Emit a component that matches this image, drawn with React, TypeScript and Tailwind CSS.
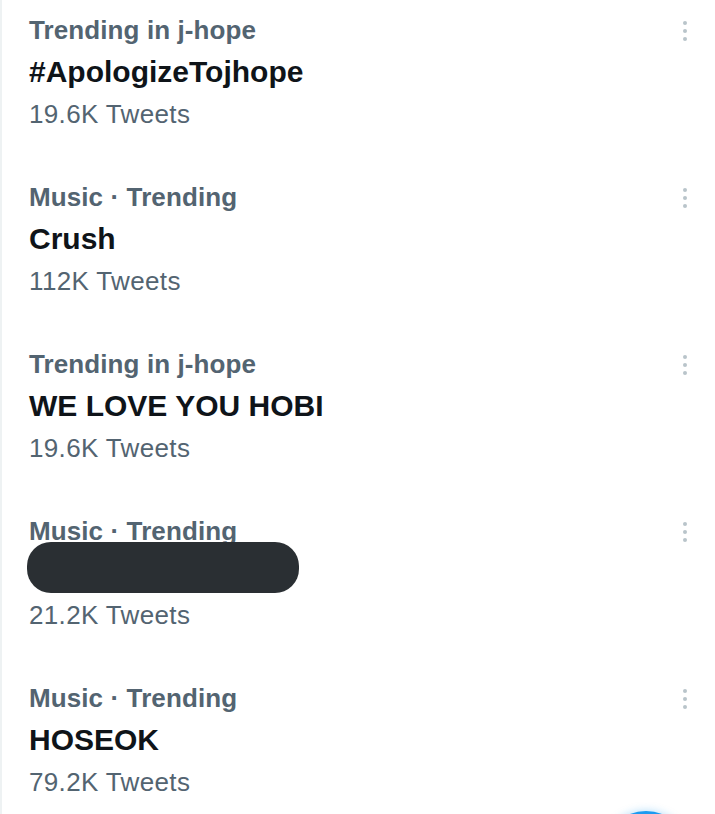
const trends = [
  { category: 'Trending in j-hope', title: '#ApologizeTojhope', count: '19.6K Tweets' },
  { category: 'Music · Trending', title: 'Crush', count: '112K Tweets' },
  { category: 'Trending in j-hope', title: 'WE LOVE YOU HOBI', count: '19.6K Tweets' },
  { category: 'Music · Trending', title: '', count: '21.2K Tweets', hidden: true },
  { category: 'Music · Trending', title: 'HOSEOK', count: '79.2K Tweets' },
];

function MoreDots() {
  return (
    <div className="flex flex-col items-center gap-[4px] pt-[12px]">
      <span className="block w-[4px] h-[4px] rounded-full bg-[#b9c4ca]" />
      <span className="block w-[4px] h-[4px] rounded-full bg-[#b9c4ca]" />
      <span className="block w-[4px] h-[4px] rounded-full bg-[#b9c4ca]" />
    </div>
  );
}

export default function App() {
  return (
    <div
      className="relative w-[715px] h-[814px] overflow-hidden bg-white border-l-2 border-[#eef2f3]"
      style={{ fontFamily: '"Liberation Sans", Arial, sans-serif' }}
    >
      <div className="pt-[9px]">
        {trends.map((t, i) => (
          <div key={i} className="flex h-[167px] pl-[27px] pr-[28px]">
            <div className="flex-1">
              <div className="text-[26px] leading-[42px] font-bold tracking-[0.1px] text-[#536471]">
                {t.category}
              </div>
              <div className="relative h-[42px] text-[30px] leading-[42px] font-bold text-[#0f1419]">
                {t.hidden ? (
                  <div className="absolute left-[-2px] top-[-10px] w-[272px] h-[51px] rounded-[24px] bg-[#2a2f33]" />
                ) : (
                  t.title
                )}
              </div>
              <div className="text-[26px] leading-[42px] tracking-[0.35px] text-[#536471]">{t.count}</div>
            </div>
            <MoreDots />
          </div>
        ))}
      </div>
      <div className="absolute left-[600px] top-[811px] w-[88px] h-[88px] rounded-full bg-[#1d9bf0] shadow-[0_0_8px_rgba(29,155,240,0.35)]" />
    </div>
  );
}
